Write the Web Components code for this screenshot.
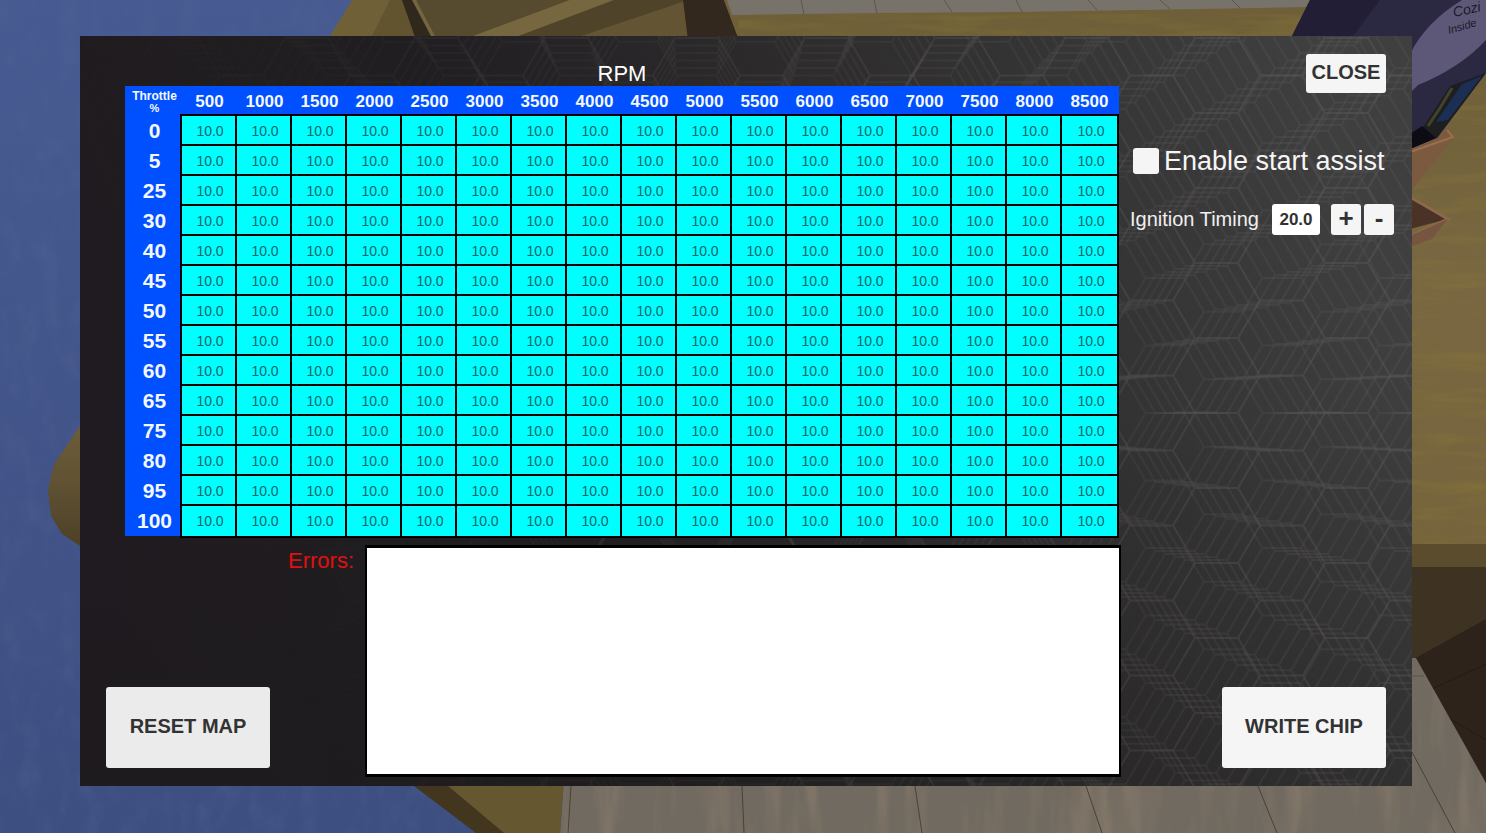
<!DOCTYPE html>
<html lang="en">
<head>
<meta charset="utf-8">
<title>Ignition map editor</title>
<style>
  html, body { margin: 0; background: #43568c; }
  body { font-family: "Liberation Sans", Arial, sans-serif; }
</style>
</head>
<body>
<chip-editor></chip-editor>

<script>
const define = (name, html, setup) => {
  const template = document.createElement('template');
  template.innerHTML = html;
  customElements.define(name, class extends HTMLElement {
    constructor() {
      super();
      this.attachShadow({ mode: 'open', delegatesFocus: true }).append(template.content.cloneNode(true));
    }
    connectedCallback() { if (setup) setup(this, this.shadowRoot); }
  });
};

/* The garage behind the dialog */
define('garage-scene', `
<style>
  :host { display: block; min-height: 0; overflow: hidden; contain: size; }
  svg { display: block; width: 100%; height: 100%; }
</style>
<svg viewBox="0 0 1486 833" preserveAspectRatio="xMidYMid slice" aria-hidden="true">
  <defs>
    <linearGradient id="wall" x1="0" y1="0" x2="0" y2="1"><stop offset="0" stop-color="#475b92"/><stop offset="1" stop-color="#3d4e81"/></linearGradient>
    <linearGradient id="bench" x1="0" y1="0" x2="0" y2="1"><stop offset="0" stop-color="#6e5f38"/><stop offset=".5" stop-color="#786741"/><stop offset="1" stop-color="#75643c"/></linearGradient>
    <linearGradient id="round" x1="0" y1="0" x2="0" y2="1"><stop offset="0" stop-color="#6c5d38"/><stop offset=".5" stop-color="#5f5132"/><stop offset="1" stop-color="#4c4026"/></linearGradient>
    <filter id="bumps" x="0" y="0" width="100%" height="100%">
      <feTurbulence type="fractalNoise" baseFrequency=".05 .03" numOctaves="3" seed="4"/>
      <feColorMatrix values="0 0 0 0 .1  0 0 0 0 .14  0 0 0 0 .3  1.6 0 0 0 -.7"/>
    </filter>
    <filter id="grain" x="0" y="0" width="100%" height="100%">
      <feTurbulence type="fractalNoise" baseFrequency=".012 .1" numOctaves="3" seed="9"/>
      <feColorMatrix values="0 0 0 0 .3  0 0 0 0 .22  0 0 0 0 .04  1.4 0 0 0 -.6"/>
    </filter>
    <filter id="grainV" x="0" y="0" width="100%" height="100%">
      <feTurbulence type="fractalNoise" baseFrequency=".05 .008" numOctaves="3" seed="5"/>
      <feColorMatrix values="0 0 0 0 .38  0 0 0 0 .29  0 0 0 0 .2  1.4 0 0 0 -.6"/>
    </filter>
    <clipPath id="floor"><path d="M564 780H1400V658H1416L1486 783V833H560Z"/></clipPath>
  </defs>
  <rect width="1486" height="833" fill="url(#wall)"/>
  <rect width="600" height="833" filter="url(#bumps)" opacity=".35"/>
  <path d="M80 426 54 464 48 490 51 516 62 534 80 546Z" fill="url(#round)"/>

  <path d="M352 0H760V60H315Z" fill="#6f6037"/>
  <path d="M390 0H404L420 40H370Z" fill="#62542f"/>
  <path d="M416 0H570L466 40H434Z" fill="#564a2f"/>
  <path d="M570 0H614L508 40H462Z" fill="#776740"/>
  <path d="M614 0H683V2L570 40H508Z" fill="#4f432a"/>
  <path d="M683 2 570 40H690Z" fill="#635533"/>
  <path d="M402 0H414L434 40H416Z" fill="#30271d"/>
  <path d="M412 0H416L437 40H433Z" fill="#75653f"/>
  <path d="M683 0H724L739 40H688Z" fill="#32281d"/>
  <path d="M724 0H1486V560H1400V40H739Z" fill="url(#bench)"/>
  <path d="M727 0H1312L1308 7 1200 9 1010 12 880 13 732 15Z" fill="#78736a"/>
  <path d="M801 0 804 14M874 0 877 13M944 0 952 12M1016 0 1022 12M1088 0 1097 10M1160 0 1170 9M1232 0 1240 8" stroke="#5c554c" fill="none"/>
  <rect x="739" y="14" width="747" height="530" filter="url(#grain)" opacity=".5"/>

  <path d="M1400 544H1486V567H1400Z" fill="#5b4c2d"/>
  <path d="M1400 567H1486V700H1400Z" fill="#3e3322"/>
  <path d="M1412 660 1486 619V800H1430Z" fill="#2d231b"/>
  <path d="M1430 690 1486 664M1445 716 1486 740" stroke="#241b15" fill="none"/>
  <path d="M564 780H1400V658H1416L1486 783V833H560Z" fill="#716a60"/>
  <g clip-path="url(#floor)"><rect x="560" y="650" width="926" height="183" filter="url(#grainV)" opacity=".5"/></g>
  <path d="M571 786 568 833M742 786 744 833M915 786 922 833M1086 786 1102 833M1258 786 1277 833M1412 752 1455 833" stroke="#4b4037" fill="none"/>
  <path d="M1412 676H1424" stroke="#5a5349"/>
  <path d="M436 780H564L560 833H495Z" fill="#655830"/>
  <path d="M406 780H441L504 833H476Z" fill="#43361f"/>

  <path d="M1410 146 1445 128 1453 138 1410 192Z" fill="#7b5a40"/>
  <path d="M1410 152 1453 137 1447 130" stroke="#98704f" stroke-width="2" fill="none"/>
  <path d="M1410 197 1448 219 1410 229Z" fill="#4a3326"/>
  <path d="M1410 197 1448 219 1410 236" stroke="#8c684c" stroke-width="3" fill="none"/>
  <path d="M1410 236 1448 219 1432 239 1410 247Z" fill="#765640"/>
  <path d="M1310 0H1486V73L1437 138 1410 149 1290 40Z" fill="#2b2842"/>
  <path d="M1310 0H1380L1350 40H1290Z" fill="#211e36"/>
  <path d="M1462 0Q1426 22 1410 54V93L1418 85Q1460 68 1486 40V0Z" fill="#5d5878"/>
  <path d="M1450 86 1486 73 1437 138 1420 132Z" fill="#1d1e20"/>
  <path d="M1462 84 1482 76 1448 120 1436 122Z" fill="#1b2f55"/>
  <path d="M1452 88 1440 108 1428 126" stroke="#44412c" stroke-width="3" fill="none"/>
  <path d="M1410 134 1422 126 1436 138 1410 149Z" fill="#0d0c14"/>
  <g fill="#1b1828" font-family="Liberation Sans" font-style="italic">
    <text transform="translate(1454 17) rotate(-12)" font-size="14">Cozi</text>
    <text transform="translate(1449 34) rotate(-16)" font-size="11">Inside</text>
  </g>
</svg>`);

/* Dark honeycomb backdrop of the dialog */
define('honeycomb-backdrop', `
<style>
  :host { display: block; overflow: hidden; contain: size; }
  svg { display: block; width: 100%; height: 100%; }
</style>
<svg viewBox="80 36 1332 750" preserveAspectRatio="xMidYMid slice" aria-hidden="true">
  <defs>
    <linearGradient id="base" x1="0" y1=".6" x2="1" y2=".4"><stop offset="0" stop-color="#1f1b20"/><stop offset=".35" stop-color="#211e21"/><stop offset=".8" stop-color="#353434"/><stop offset="1" stop-color="#403f3f"/></linearGradient>
    <linearGradient id="shade" x1="0" y1="0" x2="0" y2="1"><stop offset=".5" stop-color="#1d1b1d" stop-opacity="0"/><stop offset="1" stop-color="#1d1b1d" stop-opacity=".3"/></linearGradient>
    <linearGradient id="fade" x1="0" y1=".6" x2="1" y2=".4"><stop offset=".1" stop-color="#000"/><stop offset=".7" stop-color="#aaa"/><stop offset="1" stop-color="#fff"/></linearGradient>
    <mask id="m"><rect x="80" y="36" width="1332" height="750" fill="url(#fade)"/></mask>
  </defs>
  <rect x="80" y="36" width="1332" height="750" fill="url(#base)"/>
  <rect x="80" y="36" width="1332" height="750" fill="url(#shade)"/>
  <g id="grids" mask="url(#m)"></g>
</svg>`, (host, root) => {
  const layers = [0, 1, 2, 3, 4, 5].map(i => {
    const s = 1 - i * 0.02;
    return `<pattern id="hex${i}" width="130" height="75" patternUnits="userSpaceOnUse"
      patternTransform="translate(700 413) scale(${s}) translate(495 0)">
      <path d="M0 0H43L65 37.5 43 75H0M65 37.5H108L130 0M108 37.5 130 75" fill="none" stroke="#5c5a5b" stroke-width="2" stroke-opacity="${i ? .28 : .42}"/>
    </pattern><rect x="80" y="36" width="1332" height="750" fill="url(#hex${i})"/>`;
  });
  root.getElementById('grids').innerHTML = layers.join('');
});

/* Push button: size="compact | large | step" */
define('chip-button', `
<style>
  :host { display: inline-block; }
  button { display: block; box-sizing: border-box; width: 100%; height: 100%; margin: 0; padding: 0 0 3px; border: 0;
    border-radius: 3px; background: var(--face, #f5f5f5); color: #323232;
    font: bold 20px/24px "Liberation Sans", Arial, sans-serif; white-space: nowrap; }
  :host([size=compact]) { width: 80px; height: 39px; }
  :host([size=large]) { width: 164px; height: 81px; }
  :host([size=step]) { width: 30px; height: 31px; }
  :host([size=step]) button { font-size: 26px; }
</style>
<button type="button"><slot></slot></button>`);

/* Ignition map: throttle rows by rpm columns */
define('ignition-map', `
<style>
  :host { display: block; }
  table { width: 100%; table-layout: fixed; border-collapse: separate; border-spacing: 0; background: linear-gradient(#0050ff, #0050ff) 0 0 / 100% calc(100% - 2px) no-repeat; color: #f4f8ff; }
  caption { padding-top: 1px; color: #fff; font-size: 22px; line-height: 24px; }
  col.edge { width: 55px; }
  col.last { width: 59px; }
  th, td { box-sizing: border-box; height: 30px; padding: 0; text-align: center; vertical-align: middle; }
  thead th { height: 28px; padding: 4px 0 0 4px; font-size: 17px; line-height: 20px; }
  thead th:first-child { padding: 4px 0 0 4px; font-size: 12px; line-height: 12px; }
  thead th:last-child { padding-left: 0; }
  thead small { display: block; font-size: 11px; }
  tbody th { padding: 4px 0 0 4px; font-size: 21px; line-height: 24px; }
  td { padding: 2px 0 0 3px; border: 0 solid #000; border-width: 2px 0 0 2px; background: #00ffff; color: #08686a; font-size: 14px; line-height: 16px; }
  td:last-child { border-right-width: 2px; }
  tbody tr:last-child td { height: 34px; padding-top: 0; border-bottom-width: 2px; }
  tbody tr:last-child th { padding-top: 0; }
</style>
<table>
  <caption>RPM</caption>
  <colgroup></colgroup>
  <thead></thead>
  <tbody></tbody>
</table>`, (host, root) => {
  const rpm = Array.from({ length: 17 }, (_, i) => 500 * (i + 1));
  const throttle = [0, 5, 25, 30, 40, 45, 50, 55, 60, 65, 75, 80, 95, 100];
  root.querySelector('colgroup').innerHTML = `<col class="edge"><col span="${rpm.length - 1}"><col class="last">`;
  root.querySelector('thead').innerHTML =
    `<tr><th scope="col">Throttle<small>%</small></th>${rpm.map(r => `<th scope="col">${r}</th>`).join('')}</tr>`;
  root.querySelector('tbody').innerHTML = throttle.map(t =>
    `<tr><th scope="row">${t}</th>${rpm.map(() => '<td>10.0</td>').join('')}</tr>`).join('');
});

define('error-log', `
<style>
  :host { display: flex; justify-content: flex-end; gap: 11px; }
  label { padding-top: 4px; color: #e01010; font-size: 22px; line-height: 24px; }
  textarea { box-sizing: border-box; flex: 0 1 756px; min-width: 0; height: 232px; margin: 0; padding: 4px; resize: none;
    border: 3px solid #000; border-width: 3px 2px; border-radius: 0; background: #fff; color: #323232; font: 16px/20px "Liberation Sans", Arial, sans-serif; }
</style>
<label for="log">Errors:</label>
<textarea id="log" readonly></textarea>`);

define('start-assist', `
<style>
  :host { display: flex; align-items: center; gap: 5px; }
  input { appearance: none; flex: none; width: 26px; height: 26px; margin: 0; border-radius: 3px; background: #f5f5f5; }
  input:checked { background: #f5f5f5 radial-gradient(#323232 50%, transparent 52%); }
  label { color: #f5f5f5; font-size: 27px; line-height: 32px; white-space: nowrap; }
</style>
<input type="checkbox" id="assist"><label for="assist">Enable start assist</label>`);

define('ignition-timing', `
<style>
  :host { display: flex; align-items: center; }
  label { flex: 1; padding-bottom: 2px; color: #f0f0f0; font-size: 20px; line-height: 24px; white-space: nowrap; }
  input { box-sizing: border-box; width: 48px; height: 31px; margin: 0 11px 0 0; padding: 0; border: 0; border-radius: 3px;
    background: #fff; color: #323232; font: bold 17px/20px "Liberation Sans", Arial, sans-serif; text-align: center; }
  chip-button + chip-button { margin-left: 3px; }
</style>
<label for="timing">Ignition Timing</label>
<input id="timing" type="text" inputmode="decimal" value="20.0">
<chip-button size="step" id="up">+</chip-button><chip-button size="step" id="down">-</chip-button>`, (host, root) => {
  const field = root.getElementById('timing');
  const step = d => { field.value = (parseFloat(field.value) + d).toFixed(1); };
  root.getElementById('up').onclick = () => step(0.5);
  root.getElementById('down').onclick = () => step(-0.5);
});

/* Dialog frame: map and log in the main column, settings in the side column */
define('chip-dialog', `
<style>
  :host { display: grid; min-width: 0; }
  honeycomb-backdrop, .frame { grid-area: 1 / 1; }
  .frame { display: grid; grid-template-columns: minmax(0, 1fr) 291px; padding: 18px 0 9px; }
  main { display: flex; flex-direction: column; gap: 7px; padding: 7px 0 0 26px; }
  .map { padding: 0 2px 0 19px; }
  .bottom { display: grid; grid-template-columns: 164px minmax(0, 1fr); align-items: end; }
  aside { display: flex; flex-direction: column; padding: 0 18px 9px 9px; }
  .end { align-self: flex-end; margin-right: 8px; }
  .settings { display: grid; gap: 27px; flex: 1; align-content: start; padding-top: 52px; }
  .assist { padding-left: 3px; }
</style>
<honeycomb-backdrop></honeycomb-backdrop>
<div class="frame">
  <main>
    <div class="map"><slot name="map"></slot></div>
    <div class="bottom"><slot name="reset"></slot><slot name="log"></slot></div>
  </main>
  <aside>
    <div class="end"><slot name="close"></slot></div>
    <div class="settings"><div class="assist"><slot name="assist"></slot></div><slot name="timing"></slot></div>
    <div class="end"><slot name="write"></slot></div>
  </aside>
</div>`);

define('chip-editor', `
<style>
  :host { display: grid; min-height: 100vh; }
  garage-scene, .stage { grid-area: 1 / 1; }
  .stage { display: grid; padding: 36px 74px 47px 80px; }
  chip-button { vertical-align: top; }
  .reset { --face: #ebebeb; margin-bottom: 9px; }
</style>
<garage-scene></garage-scene>
<div class="stage">
  <chip-dialog>
    <ignition-map slot="map"></ignition-map>
    <chip-button slot="reset" class="reset" size="large">RESET MAP</chip-button>
    <error-log slot="log"></error-log>
    <chip-button slot="close" size="compact">CLOSE</chip-button>
    <start-assist slot="assist"></start-assist>
    <ignition-timing slot="timing"></ignition-timing>
    <chip-button slot="write" size="large">WRITE CHIP</chip-button>
  </chip-dialog>
</div>`);
</script>
</body>
</html>
